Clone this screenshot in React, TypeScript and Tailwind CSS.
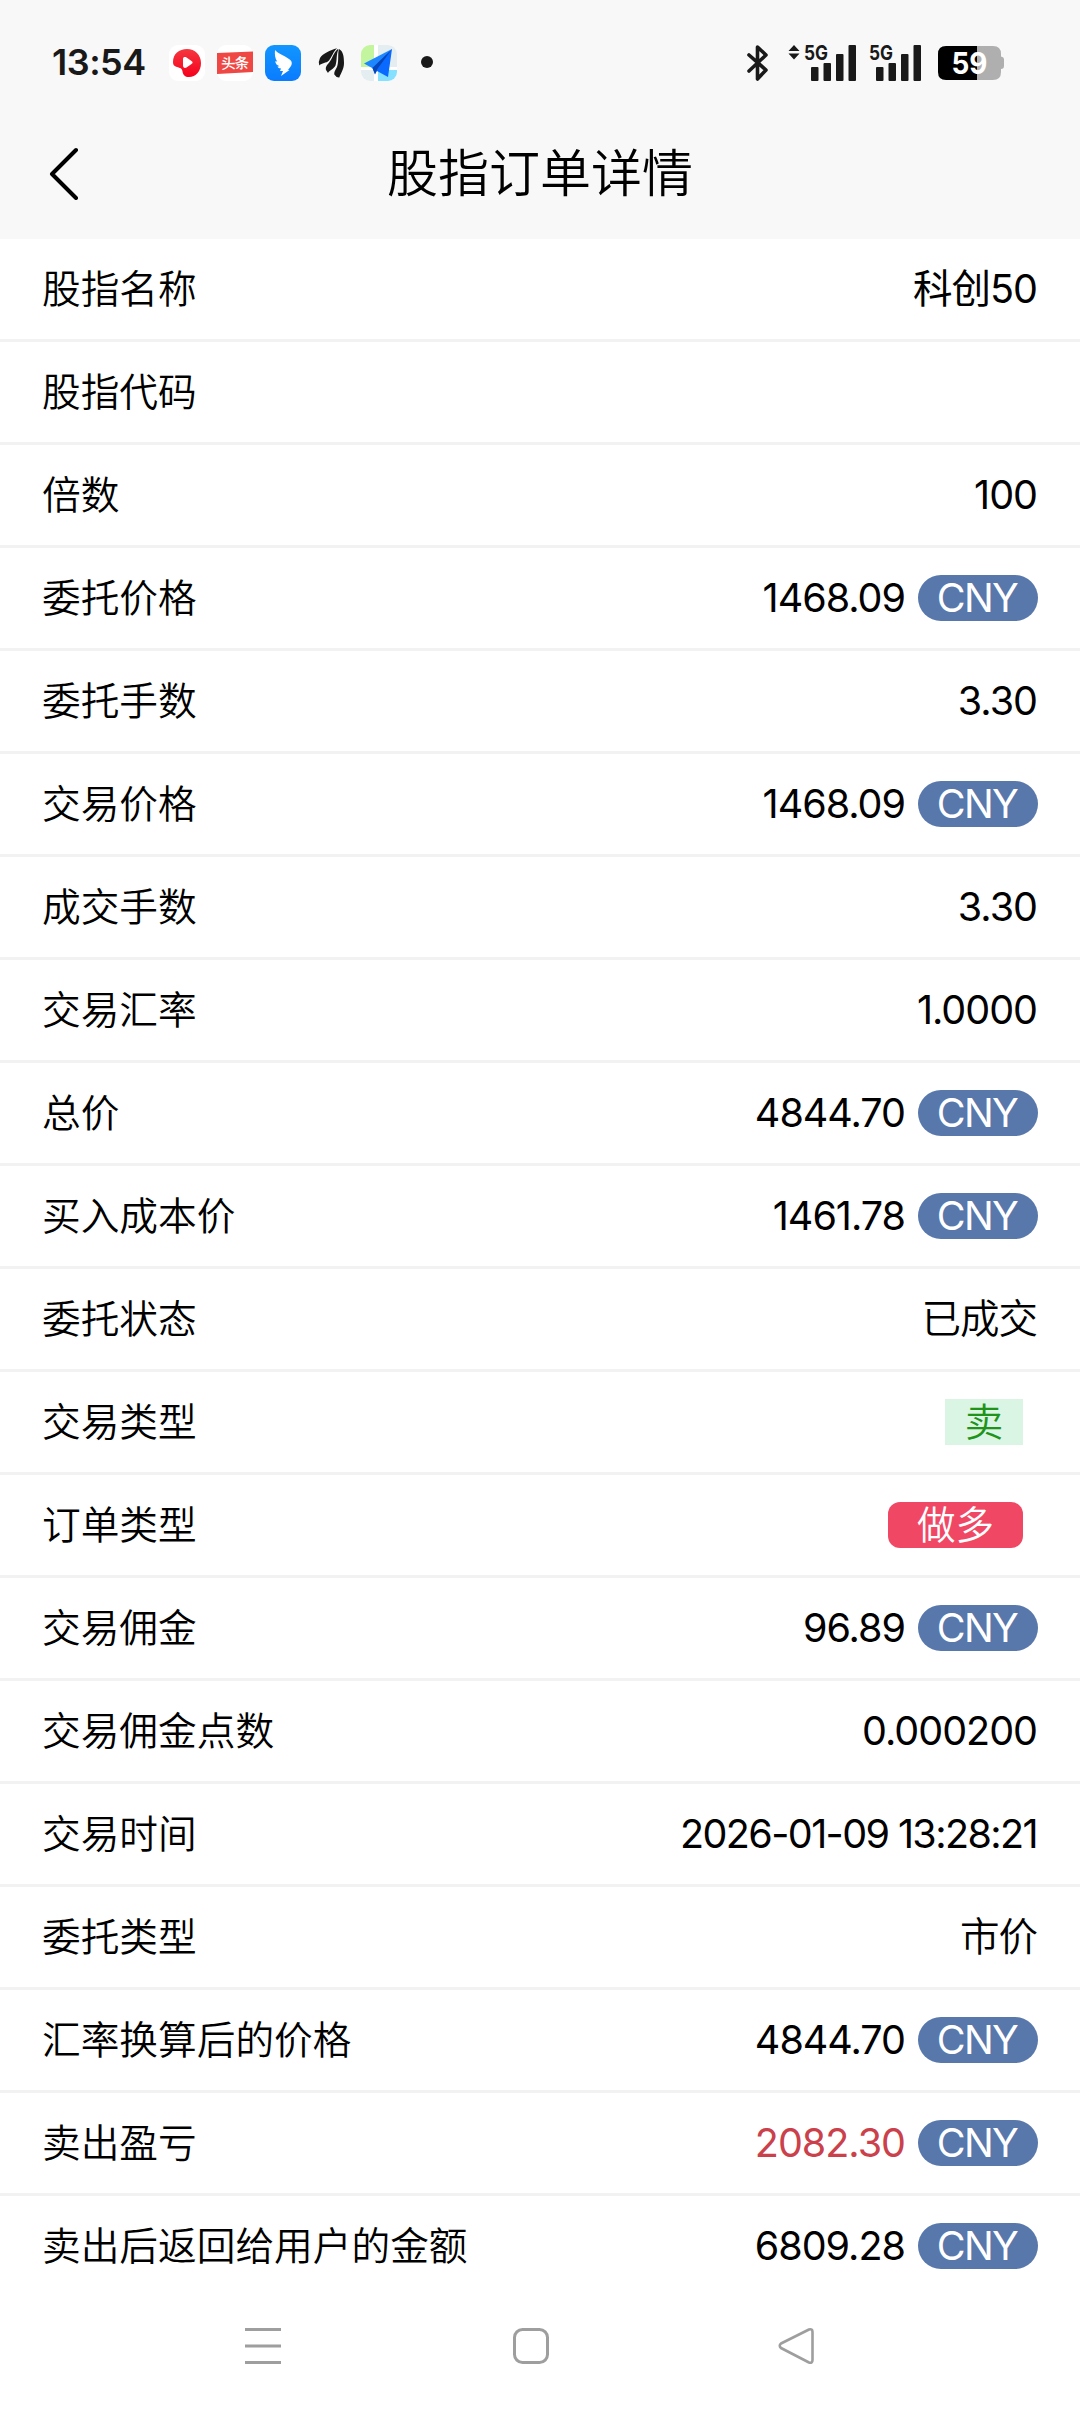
import React from "react";

type Tag = "cny" | "sell" | "long";

interface OrderRow {
  label: string;
  value?: string;
  tag?: Tag;
  highlight?: boolean;
  tight?: boolean;
}

const rows: OrderRow[] = [
  { label: "股指名称", value: "科创50" },
  { label: "股指代码" },
  { label: "倍数", value: "100" },
  { label: "委托价格", value: "1468.09", tag: "cny" },
  { label: "委托手数", value: "3.30" },
  { label: "交易价格", value: "1468.09", tag: "cny" },
  { label: "成交手数", value: "3.30" },
  { label: "交易汇率", value: "1.0000" },
  { label: "总价", value: "4844.70", tag: "cny" },
  { label: "买入成本价", value: "1461.78", tag: "cny" },
  { label: "委托状态", value: "已成交" },
  { label: "交易类型", tag: "sell" },
  { label: "订单类型", tag: "long" },
  { label: "交易佣金", value: "96.89", tag: "cny" },
  { label: "交易佣金点数", value: "0.000200" },
  { label: "交易时间", value: "2026-01-09 13:28:21", tight: true },
  { label: "委托类型", value: "市价" },
  { label: "汇率换算后的价格", value: "4844.70", tag: "cny" },
  { label: "卖出盈亏", value: "2082.30", tag: "cny", highlight: true },
  { label: "卖出后返回给用户的金额", value: "6809.28", tag: "cny" },
];

const AppIcons: React.FC = () => (
  <svg width="270" height="36" viewBox="0 0 270 36">
    <defs>
      <linearGradient id="red" x1="0" y1="0" x2="0" y2="1">
        <stop offset="0" stopColor="#f5383f" />
        <stop offset="1" stopColor="#f5001d" />
      </linearGradient>
      <linearGradient id="blue" x1="0" y1="0" x2="0" y2="1">
        <stop offset="0" stopColor="#1296ff" />
        <stop offset="1" stopColor="#0a7cff" />
      </linearGradient>
      <clipPath id="map">
        <rect x="192" y="0" width="36" height="36" rx="9" />
      </clipPath>
    </defs>
    {/* video */}
    <rect width="36" height="36" rx="9" fill="#fff" />
    <path d="M4 17C4 9 10 4 18 4s14 6 14 14-5 14-12 14c-4 0-6-2-6.500-5.500C13 23 11 23 8 22 5 21 4 20 4 17Z" fill="url(#red)" />
    <path d="M14 14c0-2 2-2.500 3.500-1.500l5 3.500c1.500 1 1.500 2 0 3l-5 3.500c-2 1-3.500 0-3.500-2Z" fill="#fff" />
    {/* headlines */}
    <rect x="48" width="36" height="36" rx="9" fill="#fff" />
    <path d="M48 8 84 6.500V27L48 29Z" fill="#ee4744" />
    <text x="52" y="23.500" fontSize="14.500" fontWeight="500" fill="#fff" textLength="28" transform="rotate(-2 66 18)">头条</text>
    {/* wing */}
    <rect x="96" width="36" height="36" rx="9" fill="url(#blue)" />
    <path d="M106 5c3 4 9 5 14 9 3 2 3.500 4 2 7l-3 4h1.500L112 31l2-5h-3l1-2.500c-2 0-3-1-3.500-2l2-.3c-3-1-4-3-4.300-5l2 .4c-2-3-2.700-7-2.200-11.600Z" fill="#fff" />
    {/* feathers */}
    <g fill="#191919">
      <path d="M168 3.300C161 5.500 154 8.500 151 13q-2 4-.7 7.500C153 17.500 157 18.500 160 15.500 163 12 164 7 168 3.300Z" />
      <path d="M168.500 4.200C164.500 8 163.500 13 160.500 17 158.500 19.500 156 22 157 25l2 3C161 24.500 164.500 24.500 166.500 20.500 168.300 15.500 167 9 169.500 4.500Z" />
      <path d="M170 4C168.500 8 170 15 168.300 21 167.500 24 165 26 165.300 29.500q2 3.200 5 3C172 28 175 24 175 18 175 11 174 6 170 4Z" />
    </g>
    {/* map */}
    <g clipPath="url(#map)">
      <rect x="192" width="36" height="36" fill="#fff" />
      <rect x="192" width="13" height="22" fill="#c2f59e" />
      <rect x="209" width="19" height="22" fill="#e4edf0" />
      <rect x="192" y="25" width="13" height="11" fill="#e4edf0" />
      <rect x="209" y="25" width="19" height="11" fill="#86e0ff" />
    </g>
    <path d="M223 4 195 18.500l9 5Z" fill="#1e86ff" />
    <path d="M223 4 219 32 208 26 206 29 203.500 23Z" fill="#0a69ff" />
    <path d="M223 4 203.500 23 206 29.500 208 24.500Z" fill="#0646b8" />
    <circle cx="258" cy="17" r="6" fill="#191919" />
  </svg>
);

const Signal: React.FC<{ arrows?: boolean }> = ({ arrows }) => (
  <svg className="overflow-visible" width={arrows ? 67 : 52} height="38" viewBox={arrows ? "-15 0 67 38" : "0 0 52 38"} fill="#191919">
    {arrows && <path d="M-10 1-4.500 7h-11ZM-10 15.500l5.500-6h-11Z" />}
    <text x="0" y="16" fontSize="20.500" fontWeight="700" textLength="24" lengthAdjust="spacingAndGlyphs">5G</text>
    <rect x="7" y="23" width="7.500" height="14" rx="1" />
    <rect x="19.500" y="19" width="7.500" height="18" rx="1" />
    <rect x="32" y="10" width="7.500" height="27" rx="1" />
    <rect x="44.500" y="1" width="7.500" height="36" rx="1" />
  </svg>
);

const Battery: React.FC = () => (
  <svg width="66" height="34" viewBox="0 0 66 34">
    <path d="M39 0h16q8 0 8 8v2.500q3 .5 3 3v6.500q0 3-3 3v3q0 8-8 8H39Z" fill="#afafaf" />
    <path d="M8 0h31v34H8q-8 0-8-8V8q0-8 8-8Z" fill="#000" />
    <text x="13.500" y="28" fontSize="30" fontWeight="700" fill="#fff" textLength="36" lengthAdjust="spacingAndGlyphs">59</text>
  </svg>
);

const StatusBar: React.FC = () => (
  <div className="flex h-[126px] items-center justify-between pr-[76px] pl-[52px]">
    <div className="flex items-center">
      <span className="w-[117px] pb-[2px] text-[36px] leading-none font-semibold tracking-[-0.5px] text-[#191919]">13:54</span>
      <AppIcons />
    </div>
    <div className="flex items-center">
      <svg className="mr-[20px]" width="22" height="38" viewBox="0 0 22 38" fill="none" stroke="#191919" strokeWidth="3.600" strokeLinejoin="round" strokeLinecap="round">
        <path d="M2 11 19 26 10.500 35V3L19 11 2 27" />
      </svg>
      <Signal arrows />
      <span className="w-[13px]" />
      <Signal />
      <span className="w-[17px]" />
      <Battery />
    </div>
  </div>
);

const TagBadge: React.FC<{ tag: Tag }> = ({ tag }) => {
  if (tag === "sell") {
    return (
      <span className="mr-[15px] flex h-[46px] w-[78px] items-center justify-center bg-[#daf5e3] text-[38.500px] leading-none text-[#20931a]">
        卖
      </span>
    );
  }
  if (tag === "long") {
    return (
      <span className="mr-[15px] flex h-[46px] w-[135px] items-center justify-center rounded-[12px] bg-[#f04864] text-[38.500px] leading-none text-white">
        做多
      </span>
    );
  }
  return (
    <span className="ml-[12px] flex h-[46px] w-[120px] items-center justify-center rounded-full bg-[#5877ab] pt-[2px] pr-[2px] text-[39.500px] leading-none font-normal tracking-[-1.700px] text-white">
      CNY
    </span>
  );
};

export default function App() {
  return (
    <div className="flex h-[2412px] w-[1080px] flex-col bg-white font-[Inter,'Noto_Sans_CJK_SC',sans-serif] text-black">
      <header className="h-[239px] bg-[#f8f8f8]">
        <StatusBar />
        <div className="grid h-[94px] grid-cols-[120px_1fr_120px] items-center">
          <svg className="ml-[47px]" width="32" height="54" viewBox="0 0 32 54" fill="none" stroke="#000" strokeWidth="4" strokeLinecap="round" strokeLinejoin="round">
            <path d="M29 4 5 28l24 24" />
          </svg>
          <h1 className="text-center text-[51px] leading-none font-[350]">股指订单详情</h1>
        </div>
      </header>

      <main className="h-[2060px] font-[350]">
        {rows.map((row) => (
          <div key={row.label} className="flex h-[103px] items-center justify-between border-b-3 border-[#f2f2f2] px-[42px] last:border-transparent">
            <span className="text-[38.700px] leading-none">{row.label}</span>
            <div className="flex items-center">
              {row.value && (
                <span
                  className={`mr-px pt-[2px] text-[39.500px] leading-none ${/\d/.test(row.value) ? "font-normal" : ""} ${row.tight ? "tracking-[-1.600px]" : "tracking-[-1px]"} ${row.highlight ? "text-[#cb414b]" : ""}`}
                >
                  {row.value}
                </span>
              )}
              {row.tag && <TagBadge tag={row.tag} />}
            </div>
          </div>
        ))}
      </main>

      <nav className="flex h-[94px] items-center pl-[244px]">
        <svg width="38" height="38" viewBox="0 0 38 38" stroke="#9e9e9e" strokeWidth="3">
          <path d="M1 2.500h36M1 19h36M1 35.500h36" />
        </svg>
        <svg className="ml-[230px]" width="38" height="38" viewBox="0 0 38 38" fill="none" stroke="#9e9e9e" strokeWidth="3">
          <rect x="2.500" y="2.500" width="33" height="33" rx="8" />
        </svg>
        <svg className="ml-[228px]" width="38" height="38" viewBox="0 0 38 38" fill="none" stroke="#9e9e9e" strokeWidth="2.600" strokeLinejoin="round">
          <path d="M31 2.500 3 16.500q-2.500 2 0 4.500L31 35.500q3.500 1 3.500-2.500V5q0-3.500-3.500-2.500Z" />
        </svg>
      </nav>
    </div>
  );
}
